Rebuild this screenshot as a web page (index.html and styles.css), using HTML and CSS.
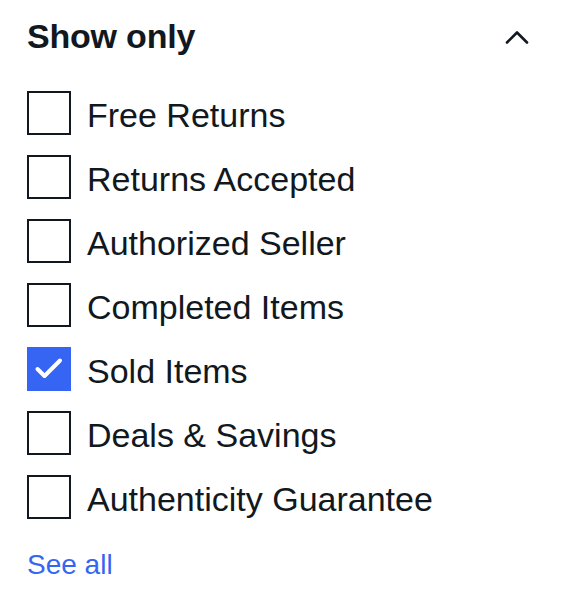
FILE: index.html
```html
<!DOCTYPE html>
<html lang="en">
<head>
<meta charset="utf-8">
<title>Show only</title>
<link rel="stylesheet" href="styles.css">
</head>
<body>
<section class="filter">
  <div class="filter-header">
    <h3 class="filter-title">Show only</h3>
    <svg class="chevron" width="24" height="14" viewBox="0 0 24 14" aria-hidden="true"><path d="M2 12.5 L12 2.5 L22 12.5" fill="none" stroke="#111820" stroke-width="2.6" stroke-linecap="round" stroke-linejoin="round"/></svg>
  </div>
  <ul class="options">
    <li class="option"><span class="box"></span><span class="label">Free Returns</span></li>
    <li class="option"><span class="box"></span><span class="label">Returns Accepted</span></li>
    <li class="option"><span class="box"></span><span class="label">Authorized Seller</span></li>
    <li class="option"><span class="box"></span><span class="label">Completed Items</span></li>
    <li class="option"><span class="box checked"><svg width="44" height="44" viewBox="0 0 44 44" aria-hidden="true"><path d="M10.5 22 L17.5 29 L33 13.5" fill="none" stroke="#fff" stroke-width="4" stroke-linecap="round" stroke-linejoin="round"/></svg></span><span class="label">Sold Items</span></li>
    <li class="option"><span class="box"></span><span class="label">Deals &amp; Savings</span></li>
    <li class="option"><span class="box"></span><span class="label">Authenticity Guarantee</span></li>
  </ul>
  <a class="see-all" href="#">See all</a>
</section>
</body>
</html>
```

FILE: styles.css
```css
html, body {
  margin: 0;
  padding: 0;
  background: #fff;
}

body {
  font-family: "Liberation Sans", Arial, Helvetica, sans-serif;
  color: #111820;
}

.filter {
  padding: 16px 32px 0 27px;
}

.filter-header {
  display: flex;
  align-items: center;
  justify-content: space-between;
  height: 40px;
}

.filter-title {
  margin: 0;
  font-size: 34px;
  line-height: 40px;
  font-weight: 700;
  letter-spacing: -0.2px;
}

.chevron {
  display: block;
  margin-top: 1px;
}

.options {
  list-style: none;
  margin: 35px 0 0;
  padding: 0;
  display: flex;
  flex-direction: column;
  gap: 20px;
}

.option {
  display: flex;
  align-items: center;
  gap: 16px;
  height: 44px;
}

.box {
  box-sizing: border-box;
  width: 44px;
  height: 44px;
  border: 2px solid #111820;
  flex: none;
  display: block;
  position: relative;
}

.box.checked {
  background: #3665f3;
  border-color: #3665f3;
}

.box.checked svg {
  position: absolute;
  left: -2px;
  top: -2px;
}

.label {
  font-size: 34px;
  line-height: 44px;
  padding-top: 3px;
}

.see-all {
  display: inline-block;
  margin-top: 30px;
  font-size: 28px;
  line-height: 32px;
  color: #3665f3;
  text-decoration: none;
}
```
